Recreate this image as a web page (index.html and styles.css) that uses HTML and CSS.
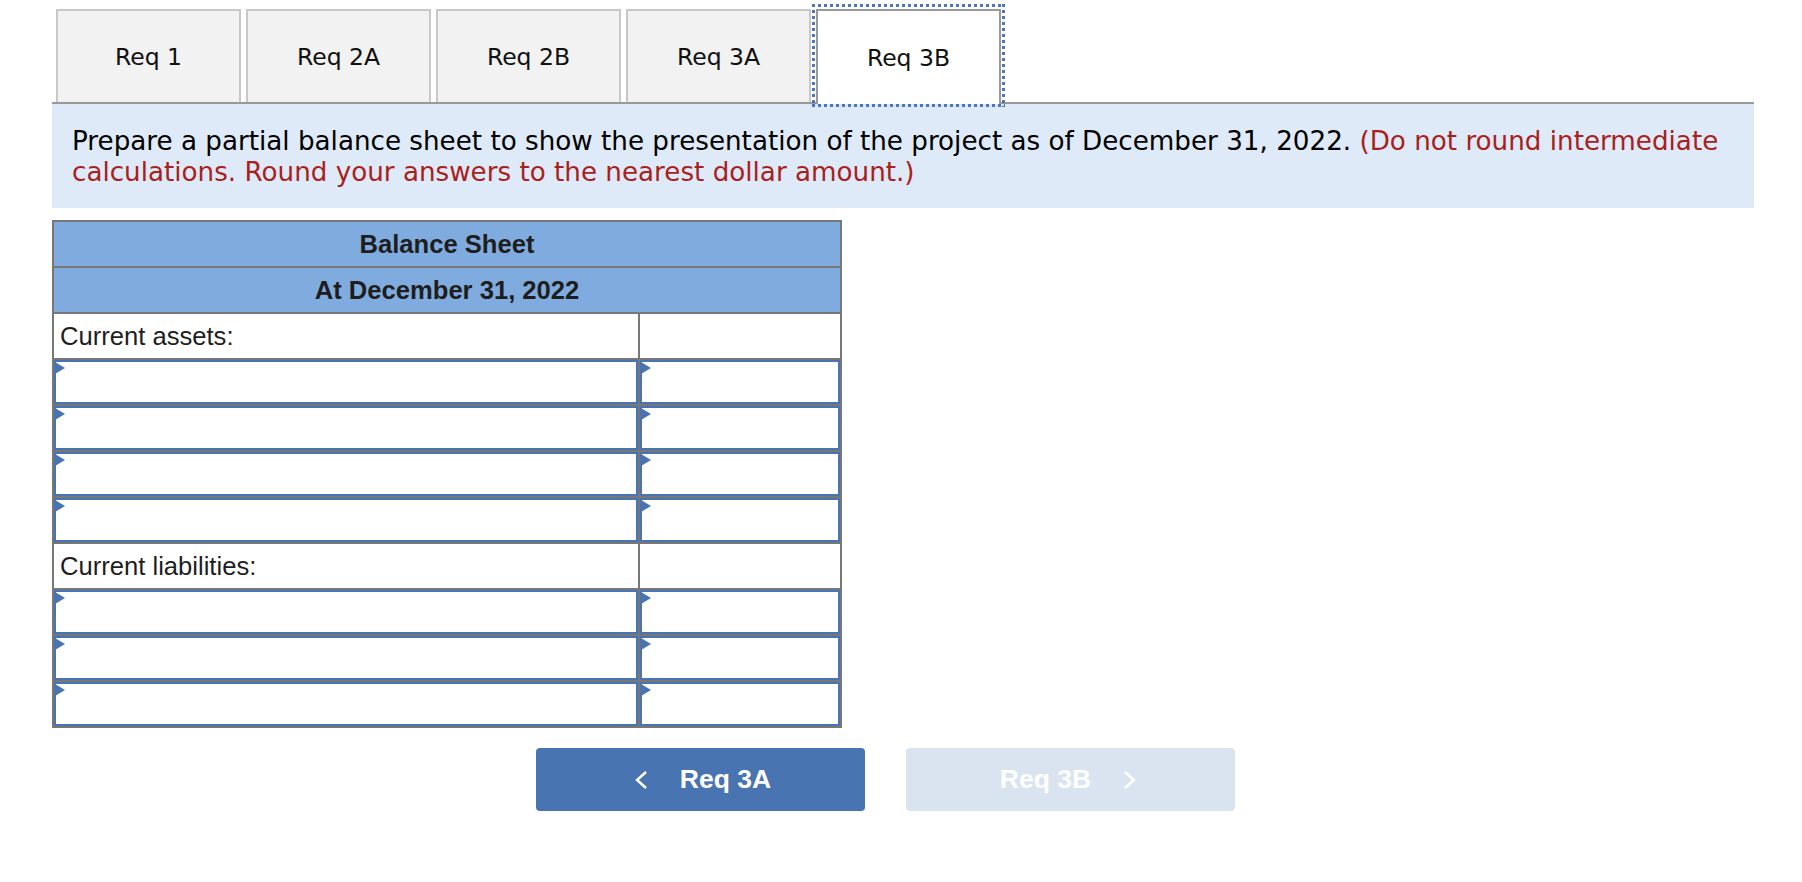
FILE: index.html
```html
<!DOCTYPE html>
<html lang="en">
<head>
<meta charset="utf-8">
<title>Req 3B</title>
<link rel="stylesheet" href="styles.css">
</head>
<body>
<div class="page">
  <div class="tabs">
    <button class="tab">Req 1</button>
    <button class="tab">Req 2A</button>
    <button class="tab">Req 2B</button>
    <button class="tab">Req 3A</button>
    <button class="tab active">Req 3B</button>
  </div>
  <div class="prompt">
    <p>Prepare a partial balance sheet to show the presentation of the project as of December 31, 2022. <span class="note">(Do not round intermediate calculations. Round your answers to the nearest dollar amount.)</span></p>
  </div>
  <table class="sheet">
    <colgroup><col class="c-label"><col class="c-amt"></colgroup>
    <tr><th colspan="2">Balance Sheet</th></tr>
    <tr><th colspan="2">At December 31, 2022</th></tr>
    <tr><td class="label">Current assets:</td><td></td></tr>
    <tr><td class="in"><input type="text"></td><td class="in"><input type="text"></td></tr>
    <tr><td class="in"><input type="text"></td><td class="in"><input type="text"></td></tr>
    <tr><td class="in"><input type="text"></td><td class="in"><input type="text"></td></tr>
    <tr><td class="in"><input type="text"></td><td class="in"><input type="text"></td></tr>
    <tr><td class="label">Current liabilities:</td><td></td></tr>
    <tr><td class="in"><input type="text"></td><td class="in"><input type="text"></td></tr>
    <tr><td class="in"><input type="text"></td><td class="in"><input type="text"></td></tr>
    <tr><td class="in"><input type="text"></td><td class="in"><input type="text"></td></tr>
  </table>
  <div class="nav">
    <button class="navbtn prev">
      <svg class="chev" width="14" height="20" viewBox="0 0 14 20"><polyline points="12,2 3,10 12,18" fill="none" stroke="#fff" stroke-width="2.4"/></svg>
      <span>Req 3A</span>
    </button>
    <button class="navbtn next" disabled>
      <span>Req 3B</span>
      <svg class="chev" width="14" height="20" viewBox="0 0 14 20"><polyline points="2,2 11,10 2,18" fill="none" stroke="#fff" stroke-width="2.4"/></svg>
    </button>
  </div>
</div>
</body>
</html>
```

FILE: styles.css
```css
html, body {
  margin: 0;
  padding: 0;
  background: #fff;
}

.page {
  padding: 9px 48px 0 52px;
}

.tabs {
  display: flex;
  gap: 5px;
  padding-left: 4px;
  border-bottom: 2px solid #999;
  height: 93px;
}

.tab {
  box-sizing: border-box;
  width: 185px;
  height: 93px;
  margin: 0;
  padding: 0;
  background: #f2f2f2;
  border: 2px solid #c8c8c8;
  border-bottom: none;
  font-family: "DejaVu Sans", Verdana, sans-serif;
  font-size: 23.5px;
  color: #111;
  cursor: pointer;
}

.tab.active {
  position: relative;
  height: 95px;
  background: #fff;
  border-color: #999;
}

.tab.active::after {
  content: "";
  position: absolute;
  left: -6px;
  right: -6px;
  top: -7px;
  bottom: -3px;
  background:
    repeating-linear-gradient(90deg, #4a76c0 0 3px, transparent 3px 6px) top left / 100% 3px no-repeat,
    repeating-linear-gradient(90deg, #4a76c0 0 3px, transparent 3px 6px) bottom left / 100% 3px no-repeat,
    repeating-linear-gradient(180deg, #4a76c0 0 3px, transparent 3px 6px) top left / 3px 100% no-repeat,
    repeating-linear-gradient(180deg, #4a76c0 0 3px, transparent 3px 6px) top right / 3px 100% no-repeat;
  pointer-events: none;
}

.prompt {
  background: #deeaf7;
  padding: 22px 20px 20px 20px;
}

.prompt p {
  margin: 0;
  font-family: "DejaVu Sans", Verdana, sans-serif;
  font-size: 26.2px;
  line-height: 31px;
  color: #000;
}

.note {
  color: #a8211d;
}

.sheet {
  margin-top: 12px;
  border-collapse: collapse;
  table-layout: fixed;
  width: 788px;
  font-family: "Liberation Sans", Arial, sans-serif;
  font-size: 25.6px;
  color: #1e1e1e;
}

.c-label { width: 586px; }
.c-amt { width: 202px; }

.sheet tr {
  height: 46px;
}

.sheet th,
.sheet td {
  border: 2px solid #777;
  padding: 0;
}

.sheet th {
  background: #80abde;
  font-weight: bold;
  text-align: center;
}

.sheet td.label {
  padding-left: 6px;
  text-align: left;
}

.sheet td.in {
  position: relative;
}

.sheet td.in::before {
  content: "";
  position: absolute;
  left: 1px;
  top: 2px;
  border-left: 10px solid #4874b4;
  border-top: 6px solid transparent;
  border-bottom: 6px solid transparent;
}

.sheet input {
  display: block;
  box-sizing: border-box;
  width: 100%;
  height: 44px;
  margin: 0;
  border: 2px solid #4874b4;
  background: #fff;
  font-family: "Liberation Sans", Arial, sans-serif;
  font-size: 22px;
  outline: none;
}

.nav {
  display: flex;
  gap: 41px;
  margin-top: 20px;
  padding-left: 484px;
}

.navbtn {
  box-sizing: border-box;
  width: 329px;
  height: 63px;
  margin: 0;
  border: none;
  border-radius: 4px;
  display: flex;
  align-items: center;
  justify-content: center;
  gap: 32px;
  font-family: "Liberation Sans", Arial, sans-serif;
  font-weight: bold;
  font-size: 26.5px;
  color: #fff;
  cursor: pointer;
}

.navbtn.prev {
  background: #4874b2;
  padding-right: 2px;
}

.navbtn.next {
  background: #dae4f0;
  padding-left: 2px;
}

.chev {
  display: block;
}
```
